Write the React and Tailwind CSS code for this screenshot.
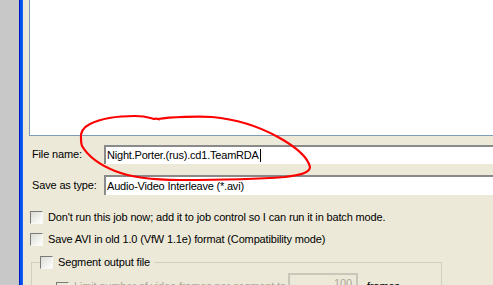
const font = { fontFamily: '"Liberation Sans", Arial, sans-serif' };

function CheckBox({ disabled, className = '' }) {
  return (
    <span
      className={`inline-block w-[13px] h-[13px] shrink-0 border border-t-[#7a7a7a] border-l-[#7a7a7a] border-r-[#f8f8f4] border-b-[#f8f8f4] ${
        disabled ? 'bg-[#ece9d8]' : 'bg-gradient-to-br from-[#dcdcd4] to-white'
      } ${className}`}
    />
  );
}

function Field({ children, cursor }) {
  return (
    <div className="flex-1 h-full bg-white border-t-2 border-l-2 border-t-[#8a8a8a] border-l-[#8a8a8a] flex items-center pl-[1px] text-black whitespace-nowrap tracking-[-0.2px]">
      {children}
      {cursor && <span className="inline-block w-px h-[13px] bg-black ml-[1px]" />}
    </div>
  );
}

export default function App() {
  return (
    <div className="relative w-[493px] h-[285px] overflow-hidden flex text-[11px] tracking-[-0.15px] text-black" style={font}>
      {/* desktop strip + window border */}
      <div className="w-[19px] shrink-0 bg-[#c8c8c8]" />
      <div className="w-[4px] shrink-0 flex">
        <div className="w-px bg-[#0019b8]" />
        <div className="flex-1 bg-[#0050f0]" />
        <div className="w-px bg-[#1a64f4]" />
      </div>

      <div className="flex-1 bg-[#ece9d8] flex flex-col whitespace-nowrap">
        {/* file list */}
        <div className="shrink-0 ml-[6px] h-[136px] bg-white border-l border-b border-[#7f9db9]" />

        {/* file name */}
        <div className="shrink-0 flex items-center mt-[9px] h-[19px]">
          <span className="w-[81px] shrink-0 pl-[9px]">File name:</span>
          <Field cursor>Night.Porter.(rus).cd1.TeamRDA</Field>
        </div>

        {/* save as type */}
        <div className="shrink-0 flex items-center mt-[11px] h-[20px]">
          <span className="w-[81px] shrink-0 pl-[9px]">Save as type:</span>
          <Field>Audio-Video Interleave (*.avi)</Field>
        </div>

        {/* options */}
        <div className="shrink-0 flex flex-col gap-[9px] mt-[16px] pl-[7px]">
          <label className="flex items-center gap-[5px] h-[13px]">
            <CheckBox />
            <span>Don't run this job now; add it to job control so I can run it in batch mode.</span>
          </label>
          <label className="flex items-center gap-[5px] h-[13px]">
            <CheckBox />
            <span>Save AVI in old 1.0 (VfW 1.1e) format (Compatibility mode)</span>
          </label>
        </div>

        {/* segment group box */}
        <div className="relative shrink-0 mt-[16px] ml-[8px] w-[411px] h-[40px] border-t border-l border-r border-[#d0d0bf]">
          <div className="absolute -top-[7px] left-[8px] flex items-center gap-[5px] bg-[#ece9d8] pr-[4px] h-[13px]">
            <CheckBox />
            <span>Segment output file</span>
          </div>
          <div className="flex items-start mt-[10px] ml-[24px] h-[20px]">
            <CheckBox disabled className="mt-[9px]" />
            <span className="ml-[5px] mt-[5px] w-[214px] shrink-0 text-[#aca899]">Limit number of video frames per segment to</span>
            <div className="w-[70px] h-[20px] shrink-0 border-2 border-[#c9c7ba] flex items-center justify-end pr-[4px] text-[#aca899]">100</div>
            <span className="ml-[9px] mt-[5px]">frames</span>
          </div>
        </div>
      </div>

      {/* red hand-drawn marking */}
      <svg className="absolute inset-0 pointer-events-none" width="493" height="285" viewBox="0 0 493 285">
        <path
          d="M81,139 C80,132 84,127 90,124 C100,119 115,116 135,116 C146,116 150,118 154,119 C156,118 162,120 158,119 C170,117 200,116 212,117 C235,119 258,126 278,137 C296,147 308,158 310,167 C310,173 300,175 285,177 C260,179 220,180 180,180 C150,180 130,177 115,171 C100,165 88,156 82,146 C81,143 81,141 81,139"
          fill="none"
          stroke="#ff0000"
          strokeWidth="2.2"
          strokeLinecap="round"
          strokeLinejoin="round"
        />
      </svg>
    </div>
  );
}
